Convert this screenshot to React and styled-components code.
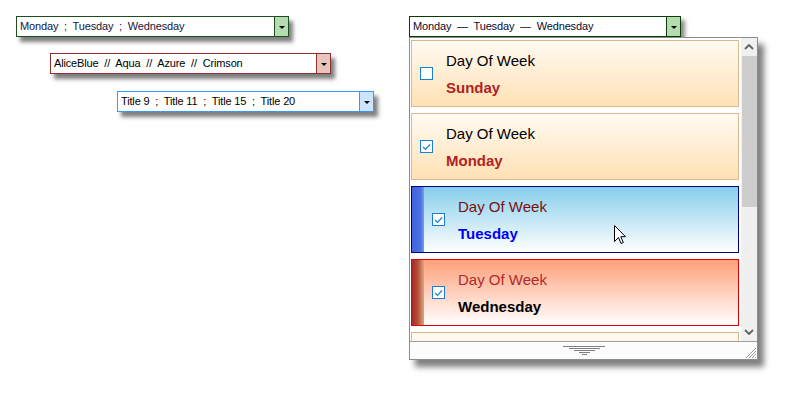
import React from 'react';
import styled, { createGlobalStyle } from 'styled-components';

const Global = createGlobalStyle`
  html, body { margin: 0; padding: 0; background: #ffffff; }
  body { font-family: "Liberation Sans", Arial, sans-serif; }
`;

const Canvas = styled.div`
  display: flex;
  align-items: flex-start;
  padding: 16px 0 0 16px;
  width: 799px;
  height: 398px;
  box-sizing: border-box;
`;

const LeftColumn = styled.div`
  display: flex;
  flex-direction: column;
  align-items: flex-start;
  gap: 16px;
  width: 393px;
`;

const RightColumn = styled.div`
  display: flex;
  flex-direction: column;
  align-items: flex-start;
  position: relative;
`;

const Combo = styled.div`
  display: flex;
  width: ${({ w }) => w}px;
  height: 21px;
  margin-left: ${({ offset }) => offset || 0}px;
  margin-top: ${({ top }) => top || 0}px;
  box-sizing: border-box;
  border: 1px solid ${({ border }) => border};
  background: #ffffff;
  box-shadow: ${({ flat }) => (flat ? '4px 4px 4px rgba(0,0,0,0.45)' : '4px 5px 4px rgba(0,0,0,0.5)')};
`;

const ComboText = styled.div`
  flex: 1;
  padding-left: 3px;
  font-size: 11px;
  letter-spacing: -0.15px;
  line-height: 19px;
  white-space: pre;
  color: ${({ color }) => color || '#000000'};
  overflow: hidden;
`;

const ArrowButton = styled.div`
  width: 13px;
  display: flex;
  align-items: center;
  justify-content: center;
  border-left: 1px solid ${({ border }) => border};
  background: ${({ bg }) => bg};

  &::after {
    content: '';
    border-left: 3px solid transparent;
    border-right: 3px solid transparent;
    border-top: 3px solid #000000;
    margin-top: 1px;
  }
`;

const Dropdown = styled.div`
  width: 349px;
  height: 323px;
  box-sizing: border-box;
  border: 1px solid #8c8c8c;
  background: #ffffff;
  display: flex;
  flex-direction: column;
  box-shadow: 6px 7px 6px rgba(0,0,0,0.5);
`;

const Body = styled.div`
  flex: 1;
  display: flex;
  min-height: 0;
`;

const List = styled.div`
  flex: 1;
  overflow: hidden;
  padding: 2px 2px 0 1px;
  display: flex;
  flex-direction: column;
  gap: 6px;
`;

const skins = {
  normal: {
    border: '#dcb98c',
    bg: 'linear-gradient(to bottom, #fffaf2 0%, #ffe1b4 100%)',
    label: '#000000',
    value: '#b22222',
  },
  hover: {
    border: '#000080',
    bg: 'linear-gradient(to bottom, #87ceeb 0%, #ffffff 100%)',
    label: '#7a1010',
    value: '#0000ff',
    strip: 'linear-gradient(to right, #3d64dc 0%, #4a70e2 70%, #7e98e8 100%)',
  },
  selected: {
    border: '#e00000',
    bg: 'linear-gradient(to bottom, #ffa07a 0%, #ffffff 100%)',
    label: '#b02a2a',
    value: '#000000',
    strip: 'linear-gradient(to right, #a52a2a 0%, #b8503a 50%, #d4aa80 100%)',
  },
};

const Item = styled.div`
  flex: 0 0 67px;
  box-sizing: border-box;
  display: flex;
  align-items: stretch;
  border: 1px solid ${({ skin }) => skins[skin].border};
  background: ${({ skin }) => skins[skin].bg};
`;

const Strip = styled.div`
  width: 12px;
  background: ${({ skin }) => skins[skin].strip};
`;

const Content = styled.div`
  display: flex;
  align-items: center;
  padding-left: 8px;
`;

const Check = styled.div`
  width: 13px;
  height: 13px;
  box-sizing: border-box;
  border: 1px solid #1a7fd4;
  background: #ffffff;
  display: flex;
  align-items: center;
  justify-content: center;
`;

const Texts = styled.div`
  display: flex;
  flex-direction: column;
  margin-left: 13px;
  line-height: 27px;
  font-size: 15px;
`;

const Label = styled.span`
  color: ${({ skin }) => skins[skin].label};
`;

const Value = styled.span`
  font-weight: bold;
  color: ${({ skin }) => skins[skin].value};
`;

const ScrollBar = styled.div`
  width: 16px;
  background: #f0f0f0;
  display: flex;
  flex-direction: column;
  align-items: center;
`;

const ScrollArrow = styled.div`
  height: 18px;
  width: 100%;
  display: flex;
  align-items: center;
  justify-content: center;
`;

const Thumb = styled.div`
  width: 15px;
  height: 151px;
  background: #cdcdcd;
`;

const Track = styled.div`
  flex: 1;
`;

const Footer = styled.div`
  height: 17px;
  border-top: 1px solid #a0a0a0;
  background: #fcfcfc;
  display: flex;
  align-items: center;
  justify-content: center;
  position: relative;
`;

const Grip = styled.svg`
  position: absolute;
  right: 0;
  bottom: 0;
`;

const Cursor = styled.svg`
  position: absolute;
  left: 205px;
  top: 209px;
`;

const Chevron = ({ up }) => (
  <svg width="10" height="6" viewBox="0 0 10 6">
    <path d={up ? 'M1 5 L5 1 L9 5' : 'M1 1 L5 5 L9 1'} fill="none" stroke="#606060" strokeWidth="1.8" />
  </svg>
);

const CheckMark = () => (
  <svg width="9" height="8" viewBox="0 0 9 8">
    <path d="M1 4 L3.5 6.5 L8 1.5" fill="none" stroke="#1a7fd4" strokeWidth="1.2" />
  </svg>
);

const days = [
  { name: 'Sunday', skin: 'normal', checked: false },
  { name: 'Monday', skin: 'normal', checked: true },
  { name: 'Tuesday', skin: 'hover', checked: true },
  { name: 'Wednesday', skin: 'selected', checked: true },
];

export default function App() {
  return (
    <>
      <Global />
      <Canvas>
        <LeftColumn>
          <Combo w={273} border="#1e4d1e">
            <ComboText color="#14143c">{'Monday  ;  Tuesday  ;  Wednesday'}</ComboText>
            <ArrowButton border="#1e4d1e" bg="#b5dcb0" />
          </Combo>
          <Combo w={281} offset={34} border="#8b3030">
            <ComboText>{'AliceBlue  //  Aqua  //  Azure  //  Crimson'}</ComboText>
            <ArrowButton border="#8b3030" bg="#e8c4bc" />
          </Combo>
          <Combo w={257} offset={101} top={1} border="#3399ff">
            <ComboText>{'Title 9  ;  Title 11  ;  Title 15  ;  Title 20'}</ComboText>
            <ArrowButton border="#3399ff" bg="#cce4ff" />
          </Combo>
        </LeftColumn>

        <RightColumn>
          <Combo w={272} border="#0a3d0a" flat>
            <ComboText color="#0a0a30">{'Monday  —  Tuesday  —  Wednesday'}</ComboText>
            <ArrowButton border="#0a3d0a" bg="#b5dcb0" />
          </Combo>
          <Dropdown>
            <Body>
              <List>
                {days.map((d) => (
                  <Item key={d.name} skin={d.skin}>
                    {skins[d.skin].strip && <Strip skin={d.skin} />}
                    <Content>
                      <Check>{d.checked && <CheckMark />}</Check>
                      <Texts>
                        <Label skin={d.skin}>Day Of Week</Label>
                        <Value skin={d.skin}>{d.name}</Value>
                      </Texts>
                    </Content>
                  </Item>
                ))}
                <Item skin="normal" />
              </List>
              <ScrollBar>
                <ScrollArrow><Chevron up /></ScrollArrow>
                <Thumb />
                <Track />
                <ScrollArrow><Chevron /></ScrollArrow>
              </ScrollBar>
            </Body>
            <Footer>
              <svg width="42" height="11" viewBox="0 0 42 11">
                <g stroke="#808080" strokeWidth="1">
                  <line x1="0" y1="1.5" x2="42" y2="1.5" />
                  <line x1="6" y1="3.5" x2="37" y2="3.5" />
                  <line x1="11" y1="5.5" x2="32" y2="5.5" />
                  <line x1="16" y1="7.5" x2="27" y2="7.5" />
                  <line x1="19" y1="9.5" x2="24" y2="9.5" />
                </g>
              </svg>
              <Grip width="12" height="12" viewBox="0 0 12 12">
                <g stroke="#9a9a9a" strokeWidth="1">
                  <line x1="11" y1="1" x2="1" y2="11" />
                  <line x1="11" y1="4" x2="4" y2="11" />
                  <line x1="11" y1="7" x2="7" y2="11" />
                  <line x1="11" y1="10" x2="10" y2="11" />
                </g>
              </Grip>
            </Footer>
          </Dropdown>
          <Cursor width="12" height="20" viewBox="0 0 12 20">
            <path d="M0.5 0.5 L0.5 16.5 L4.5 12.5 L7 18.5 L9.3 17.5 L6.8 11.7 L11.5 11.7 Z" fill="#ffffff" stroke="#000000" strokeWidth="1" />
          </Cursor>
        </RightColumn>
      </Canvas>
    </>
  );
}
